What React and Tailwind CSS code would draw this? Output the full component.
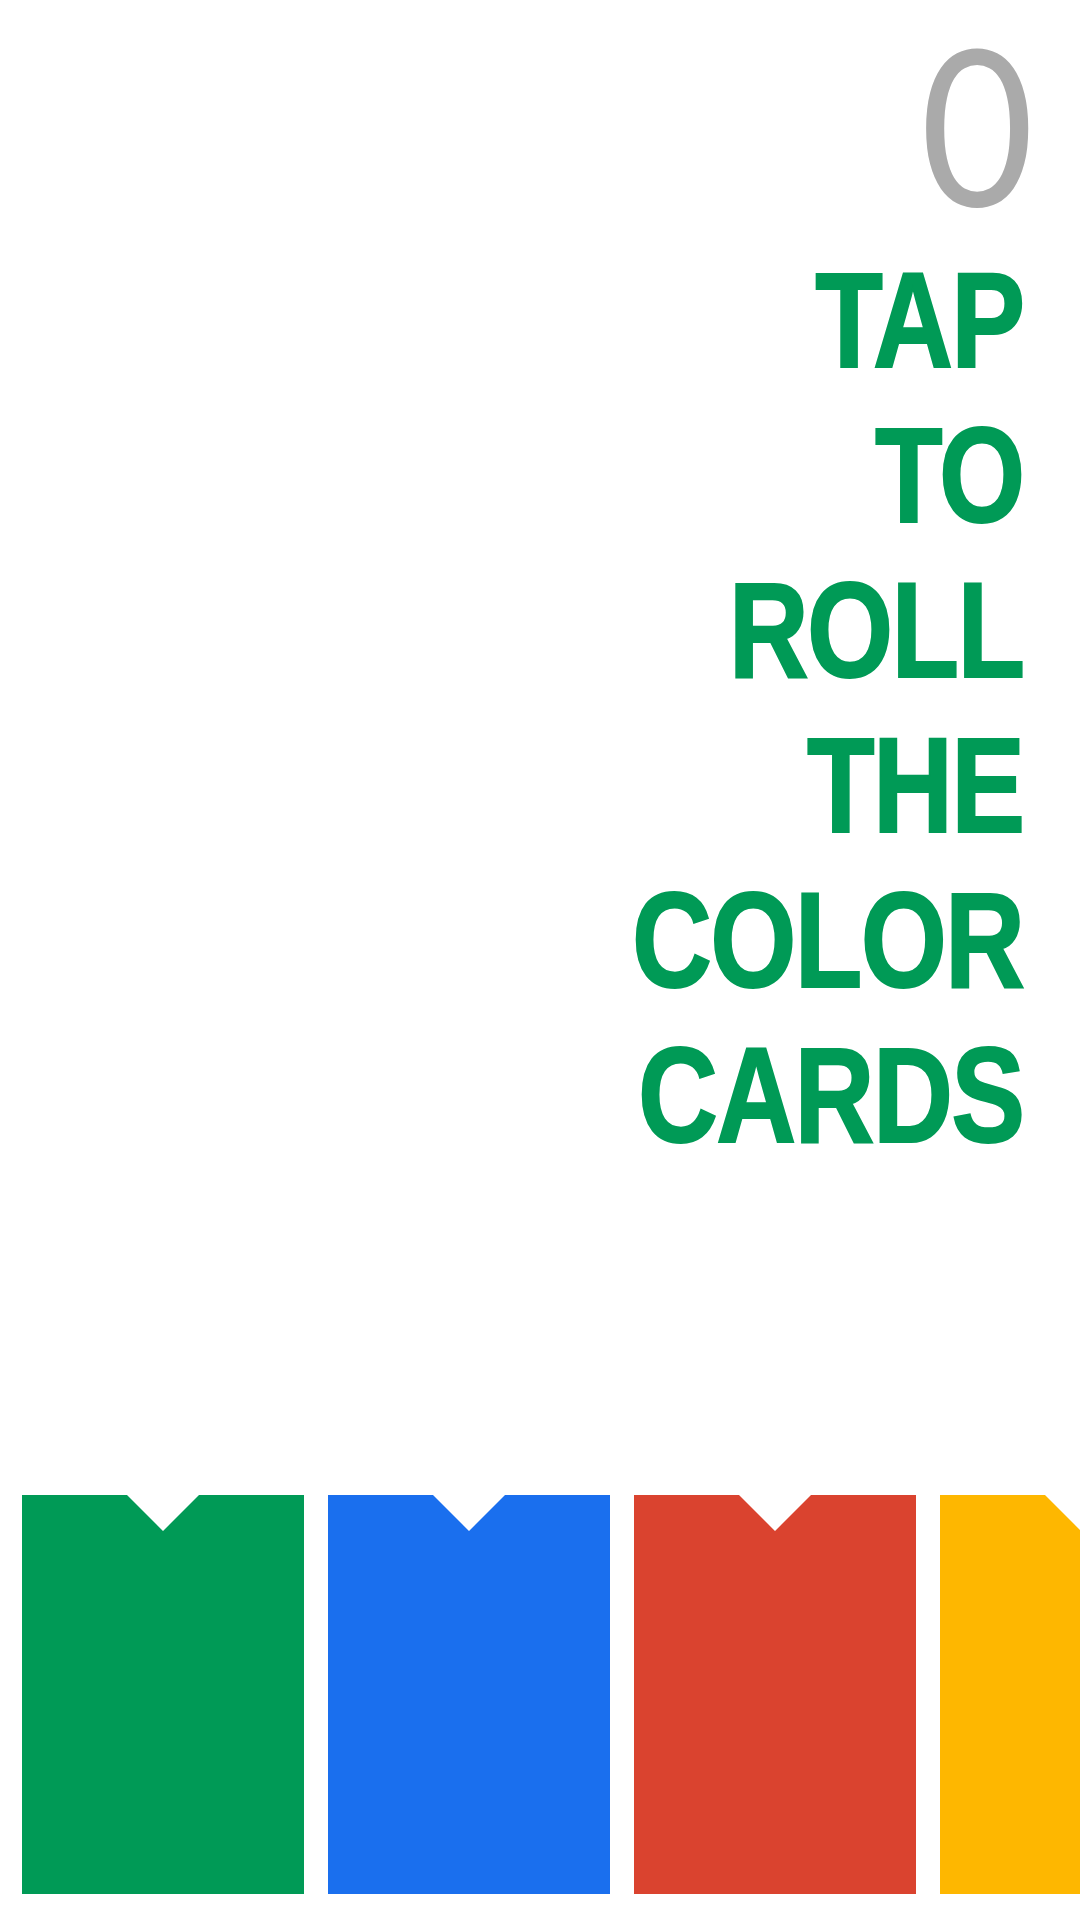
const cards = [
  { color: 'bg-[#009a56]' },
  { color: 'bg-[#1a6fee]' },
  { color: 'bg-[#da432f]' },
  { color: 'bg-[#feb700]' },
];

const words = ['TAP', 'TO', 'ROLL', 'THE', 'COLOR', 'CARDS'];

const Card = ({ color }) => (
  <div
    className={`${color} w-[282px] h-[399px] shrink-0 [clip-path:polygon(0_0,105px_0,141px_36px,177px_0,100%_0,100%_100%,0_100%)]`}
  />
);

export default function App() {
  return (
    <div className="w-[1080px] h-[1920px] bg-white overflow-hidden flex flex-col font-[family-name:'Liberation_Sans',Arial,sans-serif]">
      <div className="flex justify-end pt-[12px] pr-[40px]">
        <span className="inline-block text-[218px] leading-[220px] text-[#aaaaaa] scale-x-[0.9] font-[family-name:Lato,sans-serif]">
          0
        </span>
      </div>

      {/* title, squeezed to a narrow face */}
      <div className="flex flex-col items-end pr-[69px] mt-[11px] font-bold text-[#009a56] text-[135px] leading-[155px] tracking-[-2px] scale-x-[0.82] origin-right [-webkit-text-stroke:2px_#009a56]">
        {words.map((w) => (
          <span key={w}>{w}</span>
        ))}
      </div>

      <div className="mt-auto flex gap-[24px] pl-[22px] pb-[26px]">
        {cards.map((c, i) => (
          <Card key={i} color={c.color} />
        ))}
      </div>
    </div>
  );
}
